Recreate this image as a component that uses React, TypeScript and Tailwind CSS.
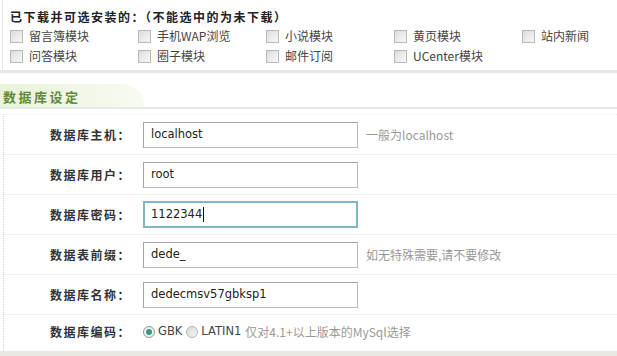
import React from "react";

const modules = [
  ["留言簿模块", "手机WAP浏览", "小说模块", "黄页模块", "站内新闻"],
  ["问答模块", "圈子模块", "邮件订阅", "UCenter模块"],
];

const Checkbox = () => (
  <span className="inline-block w-[13px] h-[13px] border border-[#b8b8b8] bg-gradient-to-br from-[#dcdcdc] to-[#f8f8f8] shrink-0" />
);

const Label = ({ children }: { children: string }) => (
  <div className="w-[139px] shrink-0 pr-[12px] text-right font-bold tracking-[1.5px] text-[#333]">{children}</div>
);

const Input = ({ value, focused }: { value: string; focused?: boolean }) => (
  <div
    className={
      focused
        ? "w-[215px] h-[27px] border-2 border-[#7fb6c8] flex items-center pl-[6px] text-[#222]"
        : "w-[215px] h-[26px] border border-[#b9b9b9] border-t-[#a4a4a4] border-l-[#a4a4a4] flex items-center pl-[7px] text-[#222]"
    }
  >
    <span className="font-['DejaVu_Sans'] text-[11.5px]">{value}</span>
    {focused && <span className="w-px h-[15px] bg-[#111] ml-px" />}
  </div>
);

const rows = [
  { label: "数据库主机：", value: "localhost", hint: "一般为localhost" },
  { label: "数据库用户：", value: "root" },
  { label: "数据库密码：", value: "1122344", focused: true },
  { label: "数据表前缀：", value: "dede_", hint: "如无特殊需要,请不要修改" },
  { label: "数据库名称：", value: "dedecmsv57gbksp1" },
];

export default function App() {
  return (
    <div className="w-[617px] h-[356px] overflow-hidden bg-white text-[12px] font-['Noto_Sans_CJK_SC',sans-serif] text-[#333] flex flex-col">
      <div className="ml-[2px] border-l border-[#e4e4e4] pl-[7px] pt-[8px] h-[70px] shrink-0">
        <div className="font-bold tracking-[1.5px] text-[#222] leading-[18px]">已下载并可选安装的：（不能选中的为未下载）</div>
        <div className="flex flex-col gap-[2px] mt-[1px]">
          {modules.map((r, i) => (
            <div key={i} className="flex h-[18px] items-center">
              {r.map((m) => (
                <div key={m} className="w-[128px] shrink-0 flex items-center gap-[6px] text-[#444]">
                  <Checkbox />
                  <span>{m}</span>
                </div>
              ))}
            </div>
          ))}
        </div>
      </div>
      <div className="h-[3px] bg-[#e6e6e6] shrink-0" />
      <div className="h-[11px] shrink-0" />
      <div className="h-[23px] shrink-0">
        <div className="w-[145px] h-[23px] rounded-tr-[40px] bg-gradient-to-r from-[#e9f3d8] via-[#f0f7e4] to-[#f8fbf2] flex items-center pl-[3px] pt-[2px]">
          <span className="font-bold tracking-[2.5px] text-[13px] text-[#628a3a]">数据库设定</span>
        </div>
      </div>
      <div className="h-[2px] bg-[#e8e8e8] shrink-0" />
      <div className="h-[5px] shrink-0" />
      <div className="flex-1 ml-[3px] border-l border-dotted border-[#cfcfcf] border-t border-t-[#ececec] flex flex-col">
        {rows.map((r) => (
          <div key={r.label} className="h-[40px] shrink-0 flex items-center border-b border-[#f3f3f3]">
            <Label>{r.label}</Label>
            <Input value={r.value} focused={r.focused} />
            {r.hint && <span className="ml-[8px] text-[#999]">{r.hint}</span>}
          </div>
        ))}
        <div className="h-[34px] flex items-center">
          <Label>数据库编码：</Label>
          <span className="w-[12px] h-[12px] rounded-full border border-[#8a9a9a] bg-[#eef3f3] flex items-center justify-center">
            <span className="w-[6px] h-[6px] rounded-full bg-[#2f9a7e]" />
          </span>
          <span className="ml-[3px] font-['DejaVu_Sans'] text-[11.5px] text-[#444]">GBK</span>
          <span className="ml-[4px] w-[12px] h-[12px] rounded-full border border-[#b5b5b5] bg-gradient-to-br from-[#d8d8d8] to-[#f6f6f6]" />
          <span className="ml-[3px] font-['DejaVu_Sans'] text-[11.5px] text-[#444]">LATIN1</span>
          <span className="ml-[4px] text-[#999]">仅对4.1+以上版本的MySql选择</span>
        </div>
      </div>
      <div className="h-[5px] bg-[#e9e9e1] shrink-0" />
    </div>
  );
}
